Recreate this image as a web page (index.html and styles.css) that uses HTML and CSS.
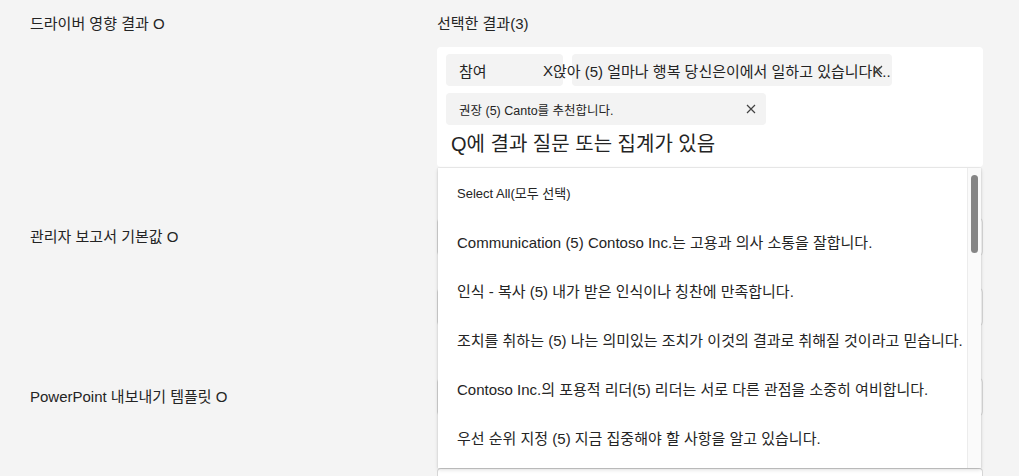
FILE: index.html
```html
<!DOCTYPE html>
<html lang="ko">
<head>
    <meta charset="UTF-8">
    <meta name="viewport" content="width=device-width, initial-scale=1.0">
    <title>보고서 설정</title>
    <link rel="stylesheet" href="styles.css">
</head>
<body>
    <div class="page">
        <section class="row row-top">
            <div class="label">드라이버 영향 결과 <span class="info">O</span></div>
            <div class="field">
                <div class="field-title">선택한 결과(3)</div>
                <div class="picker">
                    <div class="chips">
                        <span class="chip chip-short">
                            <span class="chip-text">참여</span>
                            <span class="chip-letter">X</span>
                        </span>
                        <span class="chip chip-wide chip-overflow">
                            <span class="chip-text">앉아 (5) 얼마나 행복 당신은이에서 일하고 있습니다K..</span>
                            <svg class="chip-close" width="10" height="10" viewBox="0 0 10 10"><path d="M1 1L9 9M9 1L1 9" /></svg>
                        </span>
                        <span class="chip chip-wide chip-small">
                            <span class="chip-text">권장 (5) Canto를 추천합니다.</span>
                            <svg class="chip-close" width="10" height="10" viewBox="0 0 10 10"><path d="M1 1L9 9M9 1L1 9" /></svg>
                        </span>
                    </div>
                    <div class="query">Q에 결과 질문 또는 집계가 있음</div>

                    <div class="dropdown">
                        <ul class="options">
                            <li class="option option-all">Select All(모두 선택)</li>
                            <li class="option">Communication (5) Contoso Inc.는 고용과 의사 소통을 잘합니다.</li>
                            <li class="option">인식 - 복사 (5) 내가 받은 인식이나 칭찬에 만족합니다.</li>
                            <li class="option">조치를 취하는 (5) 나는 의미있는 조치가 이것의 결과로 취해질 것이라고 믿습니다.</li>
                            <li class="option">Contoso Inc.의 포용적 리더(5) 리더는 서로 다른 관점을 소중히 여비합니다.</li>
                            <li class="option">우선 순위 지정 (5) 지금 집중해야 할 사항을 알고 있습니다.</li>
                        </ul>
                        <div class="scroll-track"><div class="scroll-thumb"></div></div>
                    </div>
                </div>
            </div>
        </section>

        <section class="row row-manager">
            <div class="label label-input">관리자 보고서 기본값 <span class="info">O</span></div>
            <div class="field field-stack">
                <div class="input"></div>
                <div class="input"></div>
            </div>
        </section>

        <section class="row row-export">
            <div class="label label-input">PowerPoint 내보내기 템플릿 <span class="info">O</span></div>
            <div class="field field-stack field-loose">
                <div class="input"></div>
                <div class="input input-last"></div>
            </div>
        </section>
    </div>
</body>
</html>
```

FILE: styles.css
```css
html, body {
    margin: 0;
    padding: 0;
    height: 100%;
    overflow: hidden;
}
body {
    background-color: #f4f4f4;
    color: #242424;
    font-family: "Liberation Sans", "Noto Sans CJK KR", sans-serif;
}
.page {
    padding: 14px 0 0 30px;
}
.row {
    display: grid;
    grid-template-columns: 407px 546px;
    align-items: start;
}
.label {
    font-size: 15px;
    line-height: 20px;
    white-space: nowrap;
}
.label-input {
    line-height: 38px;
}

/* selected results picker */
.field-title {
    font-size: 15px;
    line-height: 20px;
    margin-bottom: 13px;
}
.picker {
    position: relative;
    background-color: #fff;
    border-radius: 4px;
    padding: 7px 9px 10px;
}
.chips {
    display: flex;
    flex-wrap: wrap;
    gap: 7px 9px;
}
.chip {
    display: flex;
    align-items: center;
    box-sizing: border-box;
    height: 32px;
    padding: 0 10px 0 13px;
    background-color: #f3f3f3;
    border-radius: 4px;
    font-size: 15px;
    white-space: nowrap;
}
.chip-short {
    width: 117px;
    justify-content: space-between;
}
.chip-wide {
    width: 320px;
}
.chip-overflow {
    padding-left: 0;
}
.chip-overflow .chip-text {
    margin-left: -19px;
    flex: none;
}
.chip-overflow .chip-close {
    margin-left: -18px;
}
.chip-small {
    justify-content: space-between;
    font-size: 12.5px;
}
.chip-close {
    flex: none;
    fill: none;
    stroke: #424242;
    stroke-width: 1.2;
}
.query {
    margin-top: 6px;
    padding-left: 5px;
    font-size: 20px;
    line-height: 26px;
    white-space: nowrap;
}

/* open dropdown menu */
.dropdown {
    position: absolute;
    top: calc(100% + 1px);
    left: 1px;
    width: 543px;
    height: 300px;
    background-color: #fff;
    box-shadow: 0 0 2px rgba(0, 0, 0, 0.14), 0 2px 4px rgba(0, 0, 0, 0.12);
    z-index: 10;
    overflow: hidden;
}
.options {
    position: relative;
    z-index: 1;
    list-style: none;
    margin: 0;
    padding: 1px 0 0 19px;
}
.option {
    height: 49px;
    line-height: 49px;
    font-size: 15px;
    white-space: nowrap;
}
.option-all {
    font-size: 13px;
}
.scroll-track {
    position: absolute;
    top: 0;
    right: 0;
    bottom: 0;
    width: 13px;
    background-color: #fafafa;
    border-left: 1px solid #ececec;
}
.scroll-thumb {
    position: absolute;
    top: 7px;
    left: 3px;
    width: 7px;
    height: 78px;
    background-color: #858585;
    border-radius: 4px;
}

/* plain inputs under the menu */
.row-manager {
    margin-top: 51px;
}
.row-export {
    margin-top: 52px;
}
.field-stack {
    display: flex;
    flex-direction: column;
    gap: 32px;
}
.field-loose {
    gap: 52px;
}
.input {
    box-sizing: border-box;
    height: 38px;
    background-color: #fff;
    border: 1px solid #d6d6d6;
    border-radius: 4px;
}
.input-last {
    height: 8px;
    border-bottom: 0;
    border-radius: 4px 4px 0 0;
}
```
